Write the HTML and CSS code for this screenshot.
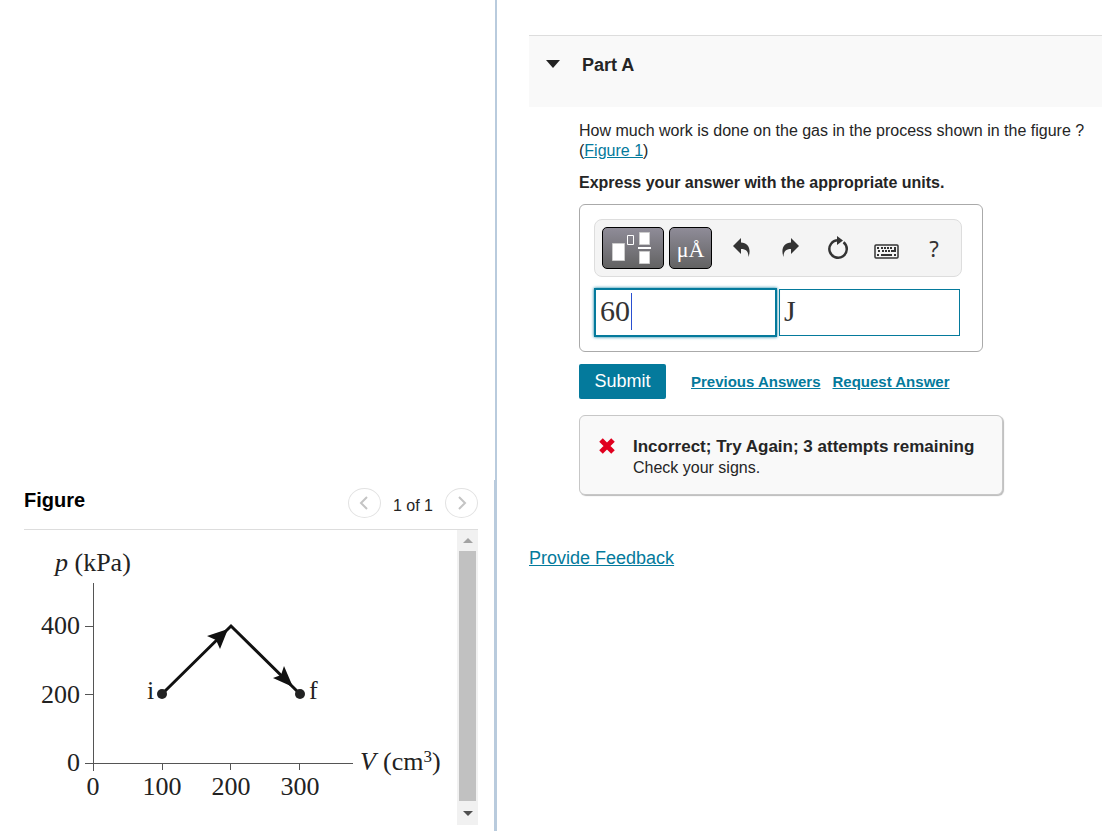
FILE: index.html
```html
<!DOCTYPE html>
<html lang="en">
<head>
    <meta charset="UTF-8">
    <meta name="viewport" content="width=device-width, initial-scale=1.0">
    <title>Part A</title>
    <link rel="stylesheet" href="styles.css">
</head>
<body>
    <div class="page">
        <aside class="left-panel">
            <section class="figure-panel">
                <header class="figure-header">
                    <h2 class="figure-title">Figure</h2>
                    <div class="pager">
                        <button class="pager-btn" type="button" aria-label="Previous figure">
                            <svg width="10" height="14" viewBox="0 0 10 14"><path d="M8 1 2 7l6 6"/></svg>
                        </button>
                        <span class="pager-text">1 of 1</span>
                        <button class="pager-btn" type="button" aria-label="Next figure">
                            <svg width="10" height="14" viewBox="0 0 10 14"><path d="m2 1 6 6-6 6"/></svg>
                        </button>
                    </div>
                </header>

                <div class="figure-body">
                    <svg class="plot" viewBox="0 0 433 295" role="img" aria-label="Pressure against volume">
                        <!-- axes and ticks -->
                        <g class="axis">
                            <path d="M69.5 53V241M61 96.500h8M61 164.500h8M61 233.500H329M69.500 233v7M138.500 233v7M206.500 233v7M275.500 233v7"/>
                        </g>
                        <!-- process i to f -->
                        <path class="process" d="M138 164 207 96 276 164"/>
                        <path class="arrow" d="M204 99 183 106 192 110 196 119z"/>
                        <path class="arrow" d="M269 157 249 148 257 145 260 136z"/>
                        <circle cx="138" cy="164" r="5"/>
                        <circle cx="276" cy="164" r="5"/>
                        <!-- labels -->
                        <text x="31" y="41"><tspan class="italic">p</tspan> (kPa)</text>
                        <text x="56" y="104" text-anchor="end">400</text>
                        <text x="56" y="173" text-anchor="end">200</text>
                        <text x="56" y="241" text-anchor="end">0</text>
                        <text x="69" y="265" text-anchor="middle">0</text>
                        <text x="138" y="265" text-anchor="middle">100</text>
                        <text x="207" y="265" text-anchor="middle">200</text>
                        <text x="276" y="265" text-anchor="middle">300</text>
                        <text x="123" y="169">i</text>
                        <text x="285" y="169">f</text>
                        <text x="336" y="240"><tspan class="italic">V</tspan></text>
                        <text x="359" y="240">(cm<tspan class="sup" dy="-8">3</tspan><tspan dy="8">)</tspan></text>
                    </svg>
                    <div class="scrollbar">
                        <button class="scroll-btn" type="button" aria-label="Scroll up">
                            <svg width="10" height="5" viewBox="0 0 10 5"><path fill="#a3a3a3" d="M0 5 5 0l5 5z"/></svg>
                        </button>
                        <div class="scroll-thumb"></div>
                        <button class="scroll-btn scroll-down" type="button" aria-label="Scroll down">
                            <svg width="10" height="5" viewBox="0 0 10 5"><path fill="#505050" d="M0 0h10L5 5z"/></svg>
                        </button>
                    </div>
                </div>
            </section>
        </aside>

        <main class="right-panel">
            <header class="part-header">
                <svg width="14" height="8" viewBox="0 0 14 8"><path fill="#222" d="M0 0h14L7 8z"/></svg>
                <h2 class="part-title">Part A</h2>
            </header>

            <div class="part-body">
                <p class="question">How much work is done on the gas in the process shown in the figure ?<br>(<a href="#">Figure 1</a>)</p>
                <p class="instructions">Express your answer with the appropriate units.</p>

                <form class="answer-form">
                    <div class="answer-box">
                        <div class="toolbar">
                            <button class="tool-dark tool-templates" type="button" aria-label="Templates">
                                <svg width="44" height="34" viewBox="0 0 44 34">
                                    <g fill="#fff" stroke="#ccc">
                                        <path d="M1.500 12.500h12v17h-12z"/>
                                        <path fill="none" stroke="#fff" d="M16.500 4.500h6v9h-6z"/>
                                        <path d="M28.500 1.500h10v12h-10zM28.500 20.500h10v12h-10z"/>
                                    </g>
                                    <path fill="#fff" d="M27 16h13v2H27z"/>
                                </svg>
                            </button>
                            <button class="tool-dark tool-units" type="button">μÅ</button>
                            <button class="tool" type="button" aria-label="Undo">
                                <svg width="18" height="20" viewBox="0 0 18 20"><path d="M0 8 8 0v4.500c7 .2 10.500 6 7.500 14.500 0-5-2-8-7.500-8V16z"/></svg>
                            </button>
                            <button class="tool" type="button" aria-label="Redo">
                                <svg width="18" height="20" viewBox="0 0 18 20"><path d="m18 8-8-8v4.500C3 4.700-.5 10.500 2.500 19c0-5 2-8 7.500-8V16z"/></svg>
                            </button>
                            <button class="tool" type="button" aria-label="Reset">
                                <svg width="22" height="24" viewBox="0 0 22 24"><path fill="none" stroke="#333" stroke-width="2.500" d="M16.500 6.200A8.700 8.700 0 1 1 11 4.300"/><path d="M10 0l6 4.500-6 4.500z"/></svg>
                            </button>
                            <button class="tool tool-keyboard" type="button" aria-label="Keyboard">
                                <svg width="25" height="15" viewBox="0 0 25 15">
                                    <rect x="1" y="1" width="23" height="13" rx="1" fill="none" stroke="#333" stroke-width="1.500"/>
                                    <path d="M3 3h2v2H3zM7 3h2v2H7zM10 3h2v2h-2zM13 3h2v2h-2zM16 3h2v2h-2zM4 6h2v2H4zM8 6h2v2H8zM11 6h2v2h-2zM14 6h2v2h-2zM3 10h2v2H3zM7 10h11v2H7zM20 10h2v2h-2zM20 3h2v5h-5V6h3z"/>
                                </svg>
                            </button>
                            <button class="tool tool-help" type="button" aria-label="Help">?</button>
                        </div>
                        <div class="fields">
                            <div class="field field-active">
                                <input class="field-input" type="text" value="60" aria-label="Value">
                                <span class="caret"></span>
                            </div>
                            <div class="field">
                                <input class="field-input" type="text" value="J" aria-label="Units">
                            </div>
                        </div>
                    </div>

                    <div class="actions">
                        <button class="submit" type="button">Submit</button>
                        <a class="action-link" href="#">Previous Answers</a>
                        <a class="action-link" href="#">Request Answer</a>
                    </div>
                </form>

                <div class="feedback">
                    <svg class="feedback-icon" width="18" height="18" viewBox="0 0 18 18"><path d="m3 3 12 12M15 3 3 15"/></svg>
                    <div>
                        <h3 class="feedback-title">Incorrect; Try Again; 3 attempts remaining</h3>
                        <p class="feedback-text">Check your signs.</p>
                    </div>
                </div>
            </div>

            <a class="provide-feedback" href="#">Provide Feedback</a>
        </main>
    </div>
</body>
</html>
```

FILE: styles.css
```css
* {
    box-sizing: border-box;
}

body {
    margin: 0;
    font-family: "Liberation Sans", Arial, sans-serif;
    font-size: 16px;
    line-height: 20px;
    color: #252525;
    background-color: #fff;
}

h2, h3, p {
    margin: 0;
}

a {
    color: #047a9c;
}

button {
    padding: 0;
    border: none;
    background: none;
    font-family: inherit;
    cursor: pointer;
}

.page {
    display: grid;
    grid-template-columns: minmax(0, 497fr) minmax(0, 605fr);
    min-height: 100vh;
}

/* Left side with the figure */
.left-panel {
    display: flex;
    flex-direction: column;
    justify-content: flex-end;
    background: linear-gradient(#b9cbdd, #b9cbdd) right / 2px 100% no-repeat;
}

.figure-panel {
    padding: 0 16px 6px 24px;
    border-right: 3px solid #b9cbdd;
}

.figure-header {
    display: flex;
    justify-content: space-between;
    height: 50px;
    border-bottom: 1px solid #ddd;
}

.figure-title {
    padding-top: 10px;
    font-size: 20px;
    color: #000;
}

.pager {
    display: flex;
    align-items: flex-start;
    gap: 12px;
    padding-top: 8px;
}

.pager-btn {
    display: flex;
    align-items: center;
    justify-content: center;
    width: 33px;
    height: 30px;
    border: 1px solid #e2e2e2;
    border-radius: 50%;
}

.pager-btn path {
    fill: none;
    stroke: #c4c4c4;
    stroke-width: 2;
}

.pager-text {
    padding-top: 8px;
}

.figure-body {
    display: flex;
}

.plot {
    flex: 1;
    min-width: 0;
    font-family: "Liberation Serif", "Times New Roman", serif;
    font-size: 26px;
    fill: #222;
}

.axis {
    fill: none;
    stroke: #555;
}

.process {
    fill: none;
    stroke: #111;
    stroke-width: 3;
}

.arrow {
    fill: #111;
}

.italic {
    font-style: italic;
}

.sup {
    font-size: 17px;
}

.scrollbar {
    display: flex;
    flex-direction: column;
    width: 21px;
    background-color: #f1f1f1;
}

.scroll-btn {
    display: flex;
    align-items: center;
    justify-content: center;
    height: 21px;
}

.scroll-down {
    height: 24px;
}

.scroll-thumb {
    flex: 1;
    margin: 0 2px;
    background-color: #c1c1c1;
}

/* Right side with the question */
.right-panel {
    padding: 35px 0 0 32px;
}

.part-header {
    display: flex;
    gap: 22px;
    height: 72px;
    padding: 19px 17px;
    border-top: 1px solid #ddd;
    background-color: #f9f9f9;
}

.part-header svg {
    margin-top: 5px;
}

.part-title {
    font-size: 18px;
}

.part-body {
    padding: 14px 0 0 50px;
}

.instructions {
    margin-top: 12px;
    font-weight: bold;
}

.answer-box {
    max-width: 404px;
    margin-top: 11px;
    padding: 14px 20px 14px 14px;
    border: 1px solid #aaa;
    border-radius: 6px;
}

.toolbar {
    display: flex;
    align-items: center;
    height: 58px;
    padding: 0 3px 0 7px;
    border: 1px solid #ddd;
    border-radius: 8px;
    background-color: #f4f4f4;
}

.tool-dark {
    display: flex;
    align-items: center;
    justify-content: center;
    height: 42px;
    border: 1px solid #000;
    border-radius: 5px;
    background: linear-gradient(#8f8c98, #626262);
    color: #fff;
}

.tool-templates {
    width: 62px;
    margin-right: 5px;
}

.tool-units {
    width: 43px;
    padding-top: 4px;
    margin-right: 6px;
    font-family: "Liberation Serif", "Times New Roman", serif;
    font-size: 22px;
}

.tool {
    display: flex;
    flex: 1;
    align-items: center;
    justify-content: center;
    max-width: 48px;
    height: 42px;
    color: #333;
}

.tool svg {
    fill: #333;
}

.tool-keyboard {
    padding-top: 6px;
}

.tool-help {
    font-family: "Noto Sans", sans-serif;
    font-size: 22px;
}

.fields {
    display: flex;
    align-items: center;
    gap: 2px;
    margin-top: 11px;
    padding-right: 2px;
}

.field {
    position: relative;
    flex: 1;
    height: 47px;
    border: 1px solid #047a9c;
}

.field-active {
    height: 49px;
    border-width: 2px;
    box-shadow: 0 0 3px #047a9c;
}

.field-input {
    width: 100%;
    height: 100%;
    padding: 0 4px 3px;
    border: none;
    outline: none;
    background: none;
    font-family: "Liberation Serif", "Times New Roman", serif;
    font-size: 30px;
    color: #333;
}

.caret {
    position: absolute;
    top: 3px;
    left: 35px;
    width: 1px;
    height: 37px;
    background-color: #2a4fd0;
}

.actions {
    display: flex;
    align-items: center;
    gap: 12px;
    margin-top: 12px;
}

.submit {
    width: 87px;
    height: 35px;
    margin-right: 13px;
    border-radius: 2px;
    background-color: #047a9c;
    font-size: 18px;
    color: #fff;
}

.action-link {
    font-size: 15px;
    font-weight: bold;
}

.feedback {
    display: flex;
    gap: 17px;
    max-width: 424px;
    margin-top: 16px;
    padding: 19px 16px 16px 18px;
    border: 1px solid #c7c7c7;
    border-radius: 6px;
    background-color: #f9f9f9;
    box-shadow: 1px 1px 1px #bbb;
}

.feedback-icon {
    flex-shrink: 0;
    margin-top: 2px;
    fill: none;
    stroke: #e0001f;
    stroke-width: 5;
}

.feedback-title {
    font-size: 17px;
    line-height: 23px;
}

.provide-feedback {
    display: inline-block;
    margin-top: 53px;
    font-size: 18px;
}
```
